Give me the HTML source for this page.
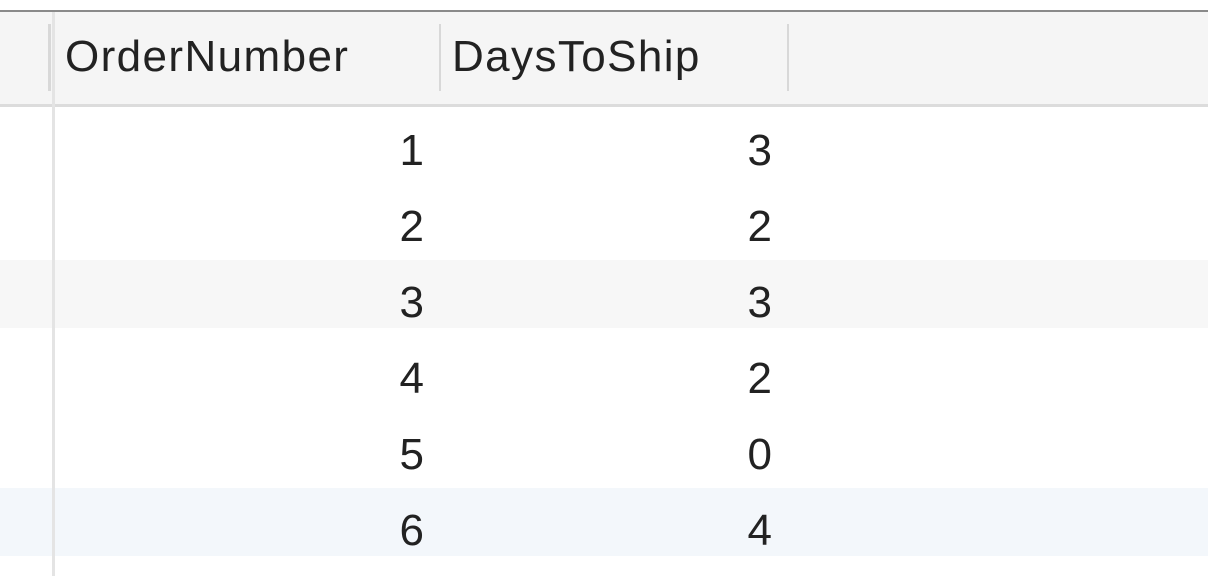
<!DOCTYPE html>
<html><head><style>
body{margin:0;width:1208px;height:576px;background:#fff;position:relative;overflow:hidden;font-family:"Liberation Sans",Arial,sans-serif;color:#222}
div{position:absolute}
.t{font-size:44px;line-height:44px;letter-spacing:1.4px}
.n{font-size:44px;line-height:44px;text-align:right;width:200px}
</style></head><body>
<div style="left:0;top:10px;width:1208px;height:2px;background:#8a8a8a"></div>
<div style="left:0;top:12px;width:1208px;height:92px;background:#f5f5f5"></div>
<div style="left:0;top:104px;width:1208px;height:3px;background:#dcdcdc"></div>
<div style="left:0;top:260px;width:1208px;height:68px;background:#f7f7f7"></div>
<div style="left:0;top:488px;width:1208px;height:68px;background:#f3f7fb"></div>
<div style="left:48px;top:24px;width:3px;height:67px;background:#d8d8d8"></div>
<div style="left:52px;top:12px;width:3px;height:564px;background:#e4e4e4"></div>
<div style="left:439px;top:24px;width:2px;height:67px;background:#d8d8d8"></div>
<div style="left:787px;top:24px;width:2px;height:67px;background:#d8d8d8"></div>
<div class="t" style="left:65px;top:35px">OrderNumber</div>
<div class="t" style="left:452px;top:35px">DaysToShip</div>
<div class="n" style="left:224px;top:129px">1</div><div class="n" style="left:572px;top:129px">3</div>
<div class="n" style="left:224px;top:205px">2</div><div class="n" style="left:572px;top:205px">2</div>
<div class="n" style="left:224px;top:281px">3</div><div class="n" style="left:572px;top:281px">3</div>
<div class="n" style="left:224px;top:357px">4</div><div class="n" style="left:572px;top:357px">2</div>
<div class="n" style="left:224px;top:433px">5</div><div class="n" style="left:572px;top:433px">0</div>
<div class="n" style="left:224px;top:509px">6</div><div class="n" style="left:572px;top:509px">4</div>
</body></html>
